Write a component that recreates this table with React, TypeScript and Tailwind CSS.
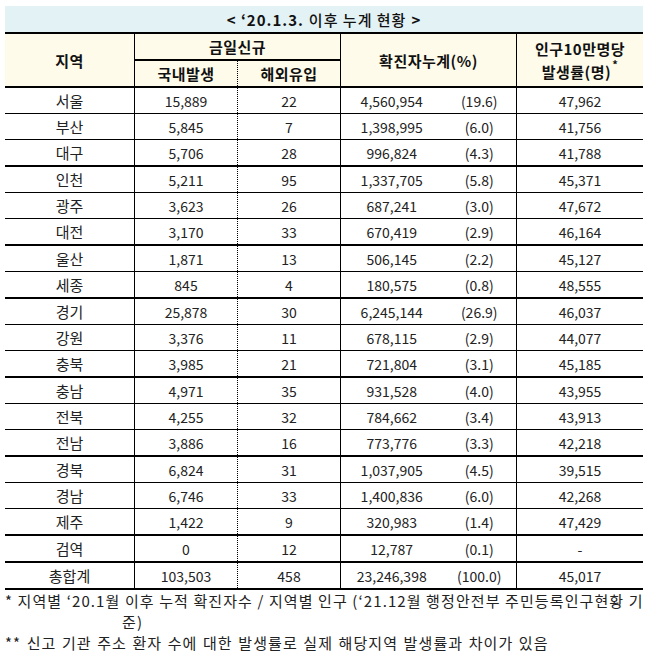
import React from "react";

type Row = { r: string; d: string; o: string; c: string; p: string; rate: string; thick: boolean };

const rows: Row[] = [
  { r: "서울", d: "15,889", o: "22", c: "4,560,954", p: "(19.6)", rate: "47,962", thick: false },
  { r: "부산", d: "5,845", o: "7", c: "1,398,995", p: "(6.0)", rate: "41,756", thick: false },
  { r: "대구", d: "5,706", o: "28", c: "996,824", p: "(4.3)", rate: "41,788", thick: true },
  { r: "인천", d: "5,211", o: "95", c: "1,337,705", p: "(5.8)", rate: "45,371", thick: false },
  { r: "광주", d: "3,623", o: "26", c: "687,241", p: "(3.0)", rate: "47,672", thick: false },
  { r: "대전", d: "3,170", o: "33", c: "670,419", p: "(2.9)", rate: "46,164", thick: true },
  { r: "울산", d: "1,871", o: "13", c: "506,145", p: "(2.2)", rate: "45,127", thick: false },
  { r: "세종", d: "845", o: "4", c: "180,575", p: "(0.8)", rate: "48,555", thick: true },
  { r: "경기", d: "25,878", o: "30", c: "6,245,144", p: "(26.9)", rate: "46,037", thick: false },
  { r: "강원", d: "3,376", o: "11", c: "678,115", p: "(2.9)", rate: "44,077", thick: false },
  { r: "충북", d: "3,985", o: "21", c: "721,804", p: "(3.1)", rate: "45,185", thick: true },
  { r: "충남", d: "4,971", o: "35", c: "931,528", p: "(4.0)", rate: "43,955", thick: false },
  { r: "전북", d: "4,255", o: "32", c: "784,662", p: "(3.4)", rate: "43,913", thick: false },
  { r: "전남", d: "3,886", o: "16", c: "773,776", p: "(3.3)", rate: "42,218", thick: true },
  { r: "경북", d: "6,824", o: "31", c: "1,037,905", p: "(4.5)", rate: "39,515", thick: false },
  { r: "경남", d: "6,746", o: "33", c: "1,400,836", p: "(6.0)", rate: "42,268", thick: false },
  { r: "제주", d: "1,422", o: "9", c: "320,983", p: "(1.4)", rate: "47,429", thick: true },
  { r: "검역", d: "0", o: "12", c: "12,787", p: "(0.1)", rate: "-", thick: true },
  { r: "총합계", d: "103,503", o: "458", c: "23,246,398", p: "(100.0)", rate: "45,017", thick: true },
];

const font = { fontFamily: '"Noto Sans CJK KR", "Noto Sans", sans-serif' };

export default function App() {
  return (
    <div className="w-[653px] h-[651px] bg-white text-[#222] overflow-hidden" style={font}>
      <div className="ml-[5px] mt-[6px] w-[638px]">
        {/* title */}
        <div className="h-[28px] bg-[#e3f2f5] border-b-2 border-black flex items-center justify-center text-[15px] tracking-[1px] leading-none text-[#111]">
          <span className="font-bold">&lt; ‘20.1.3.</span>
          <span className="ml-[5px] font-medium">이후 누계 현황</span>
          <span className="ml-[5px] font-bold">&gt;</span>
        </div>
        {/* header */}
        <div className="h-[54px] bg-[#fefbea] border-b-2 border-black grid grid-cols-[130px_206px_176px_126px] text-[15px] tracking-[0.5px] font-bold leading-none text-[#111]">
          <div className="border-r border-black flex items-center justify-center">지역</div>
          <div className="border-r border-black flex flex-col">
            <div className="h-[27px] border-b-2 border-black flex items-center justify-center">금일신규</div>
            <div className="flex-1 grid grid-cols-[103px_102px]">
              <div className="border-r border-dotted border-black flex items-center justify-center">국내발생</div>
              <div className="flex items-center justify-center">해외유입</div>
            </div>
          </div>
          <div className="border-r border-black flex items-center justify-center">확진자누계(%)</div>
          <div className="flex flex-col items-center justify-center gap-[8px]">
            <div>인구10만명당</div>
            <div className="flex items-start">
              <span>발생률(명)</span>
              <span className="ml-[1px] -mt-[5px] text-[11px]">*</span>
            </div>
          </div>
        </div>
        {/* data rows */}
        {rows.map((row) => (
          <div
            key={row.r}
            className={
              "grid grid-cols-[130px_103px_103px_176px_126px] text-[14px] leading-none " +
              (row.thick ? "h-[27px] border-b-2 border-black" : "h-[26px] border-b border-black")
            }
          >
            <div className="border-r border-black flex items-center justify-center text-[15px]">{row.r}</div>
            <div className="border-r border-dotted border-black flex items-center justify-center">{row.d}</div>
            <div className="border-r border-black flex items-center justify-center">{row.o}</div>
            <div className="border-r border-black flex items-center">
              <span className="w-[102px] text-center">{row.c}</span>
              <span className="w-[74px] text-center">{row.p}</span>
            </div>
            <div className="flex items-center justify-center">{row.rate}</div>
          </div>
        ))}
      </div>
      {/* footnotes */}
      <div className="ml-[5px] text-[15px] tracking-[1.1px] leading-[21px] text-[#222]">
        <div className="whitespace-nowrap">* 지역별 ‘20.1월 이후 누적 확진자수 / 지역별 인구 (‘21.12월 행정안전부 주민등록인구현황 기</div>
        <div className="pl-[117px]">준)</div>
        <div className="mt-[3px] leading-[16px] whitespace-nowrap [word-spacing:1px]">** 신고 기관 주소 환자 수에 대한 발생률로 실제 해당지역 발생률과 차이가 있음</div>
      </div>
    </div>
  );
}
